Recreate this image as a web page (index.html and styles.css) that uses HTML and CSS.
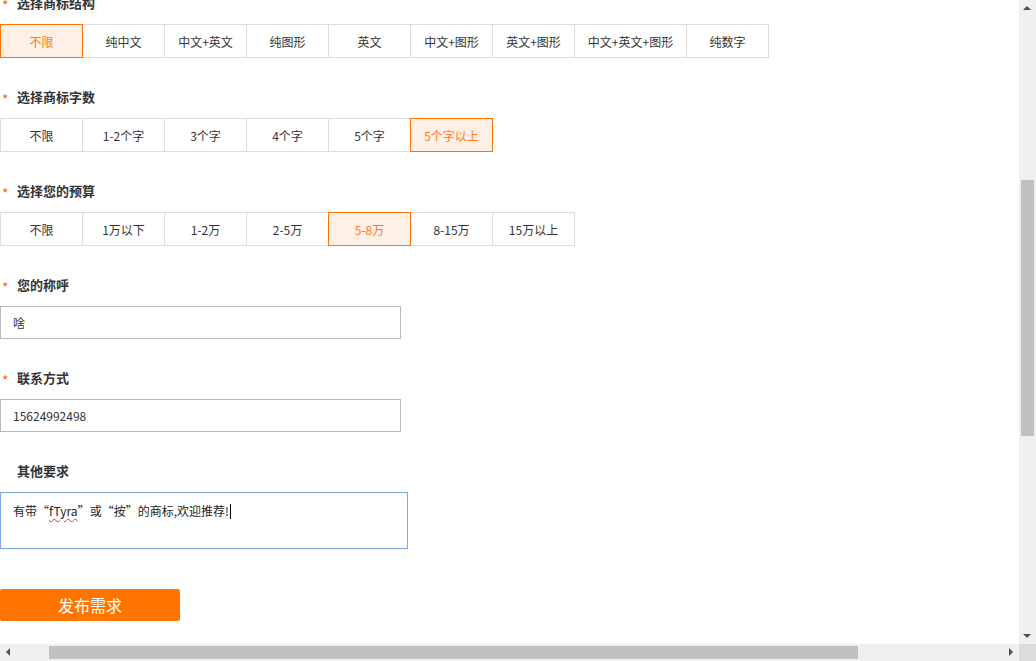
FILE: index.html
```html
<!DOCTYPE html>
<html lang="zh-CN">
<head>
<meta charset="utf-8">
<title>发布需求</title>
<link rel="stylesheet" href="styles.css">
</head>
<body>
<div class="window">
  <div class="viewport">
    <div class="form">
      <div class="group">
        <div class="label"><span class="star">*</span>选择商标结构</div>
        <div class="options">
          <div class="opt active">不限</div>
          <div class="opt">纯中文</div>
          <div class="opt">中文+英文</div>
          <div class="opt">纯图形</div>
          <div class="opt">英文</div>
          <div class="opt">中文+图形</div>
          <div class="opt">英文+图形</div>
          <div class="opt wide">中文+英文+图形</div>
          <div class="opt">纯数字</div>
        </div>
      </div>
      <div class="group">
        <div class="label"><span class="star">*</span>选择商标字数</div>
        <div class="options">
          <div class="opt">不限</div>
          <div class="opt">1-2个字</div>
          <div class="opt">3个字</div>
          <div class="opt">4个字</div>
          <div class="opt">5个字</div>
          <div class="opt active">5个字以上</div>
        </div>
      </div>
      <div class="group">
        <div class="label"><span class="star">*</span>选择您的预算</div>
        <div class="options">
          <div class="opt">不限</div>
          <div class="opt">1万以下</div>
          <div class="opt">1-2万</div>
          <div class="opt">2-5万</div>
          <div class="opt active">5-8万</div>
          <div class="opt">8-15万</div>
          <div class="opt">15万以上</div>
        </div>
      </div>
      <div class="group">
        <div class="label"><span class="star">*</span>您的称呼</div>
        <div class="input">啥</div>
      </div>
      <div class="group">
        <div class="label"><span class="star">*</span>联系方式</div>
        <div class="input">15624992498</div>
      </div>
      <div class="group">
        <div class="label"><span class="star hidden">*</span>其他要求</div>
        <div class="textarea">有带“<span class="spell">fTyra</span>”或“按”的商标,欢迎推荐!<span class="caret"></span></div>
      </div>
      <div class="submit">发布需求</div>
    </div>
  </div>
  <div class="vscroll">
    <div class="arrow up"></div>
    <div class="vtrack"><div class="vthumb"></div></div>
    <div class="arrow down"></div>
  </div>
  <div class="hscroll">
    <div class="arrow left"></div>
    <div class="htrack"><div class="hthumb"></div></div>
    <div class="arrow right"></div>
  </div>
  <div class="corner"></div>
</div>
</body>
</html>
```

FILE: styles.css
```css
* { box-sizing: border-box; }
html, body { margin: 0; padding: 0; overflow: hidden; }
body {
  font-family: "Noto Sans CJK SC", "Noto Sans", "Liberation Sans", sans-serif;
  color: #333;
  background: #fff;
}
.window {
  width: 1036px;
  height: 661px;
  display: grid;
  grid-template-columns: 1019px 17px;
  grid-template-rows: 644px 17px;
}
.viewport { overflow: hidden; background: #fff; }
.form { margin-top: -7px; }
.group { margin-bottom: 29px; }
.label {
  height: 20px;
  line-height: 20px;
  font-size: 13px;
  font-weight: bold;
  color: #333;
  margin-bottom: 11px;
  display: flex;
  align-items: center;
}
.star {
  color: #ff6a00;
  font-weight: normal;
  font-size: 14px;
  width: 17px;
  padding-left: 2px;
  position: relative;
  top: 2px;
}
.star.hidden { visibility: hidden; }
.options { display: flex; }
.opt {
  min-width: 83px;
  height: 34px;
  padding: 0 12px;
  border: 1px solid #dcdcdc;
  margin-left: -1px;
  display: flex;
  align-items: center;
  justify-content: center;
  font-size: 12px;
  color: #333;
  background: #fff;
  white-space: nowrap;
}
.opt:first-child { margin-left: 0; }
.opt.wide { min-width: 113px; }
.opt.active {
  border-color: #ff7300;
  background: #fff0e5;
  color: #ff7a1a;
  position: relative;
  z-index: 1;
}
.input {
  width: 401px;
  height: 33px;
  border: 1px solid #b9b9b9;
  padding: 0 12px;
  font-size: 12px;
  line-height: 31px;
  color: #333;
}
.textarea {
  width: 408px;
  height: 57px;
  border: 1px solid #7ea6e8;
  padding: 9px 12px;
  font-size: 12px;
  line-height: 18px;
  color: #222;
  white-space: pre;
}
.spell {
  text-decoration: underline wavy #e03030;
  text-decoration-thickness: 1px;
  text-underline-offset: 2px;
}
.caret {
  display: inline-block;
  width: 1px;
  height: 15px;
  background: #000;
  vertical-align: -3px;
  margin-left: 1px;
}
.submit {
  width: 180px;
  height: 32px;
  margin-top: 40px;
  background: #ff7500;
  border-radius: 2px;
  color: #fff;
  font-size: 16px;
  display: flex;
  align-items: center;
  justify-content: center;
}
.group:last-of-type { margin-bottom: 0; }
.vscroll {
  background: #f0f0f0;
  display: flex;
  flex-direction: column;
  align-items: center;
}
.vtrack { flex: 1; width: 100%; padding: 163px 2px 0; }
.vthumb { height: 256px; background: #c1c1c1; }
.hscroll {
  background: #f0f0f0;
  display: flex;
  align-items: center;
}
.htrack { flex: 1; height: 100%; padding: 2px 0 2px 32px; }
.hthumb { width: 809px; height: 13px; background: #c1c1c1; }
.corner { background: #dcdcdc; }
.arrow { width: 17px; height: 17px; flex: none; position: relative; }
.arrow::after { content: ""; position: absolute; width: 0; height: 0; }
.arrow.up::after {
  left: 4px; top: 6px;
  border-left: 4px solid transparent; border-right: 4px solid transparent;
  border-bottom: 4px solid #505050;
}
.arrow.down::after {
  left: 4px; top: 7px;
  border-left: 4px solid transparent; border-right: 4px solid transparent;
  border-top: 4px solid #505050;
}
.arrow.left::after {
  left: 6px; top: 4px;
  border-top: 4px solid transparent; border-bottom: 4px solid transparent;
  border-right: 4px solid #505050;
}
.arrow.right::after {
  left: 7px; top: 4px;
  border-top: 4px solid transparent; border-bottom: 4px solid transparent;
  border-left: 4px solid #505050;
}
```
